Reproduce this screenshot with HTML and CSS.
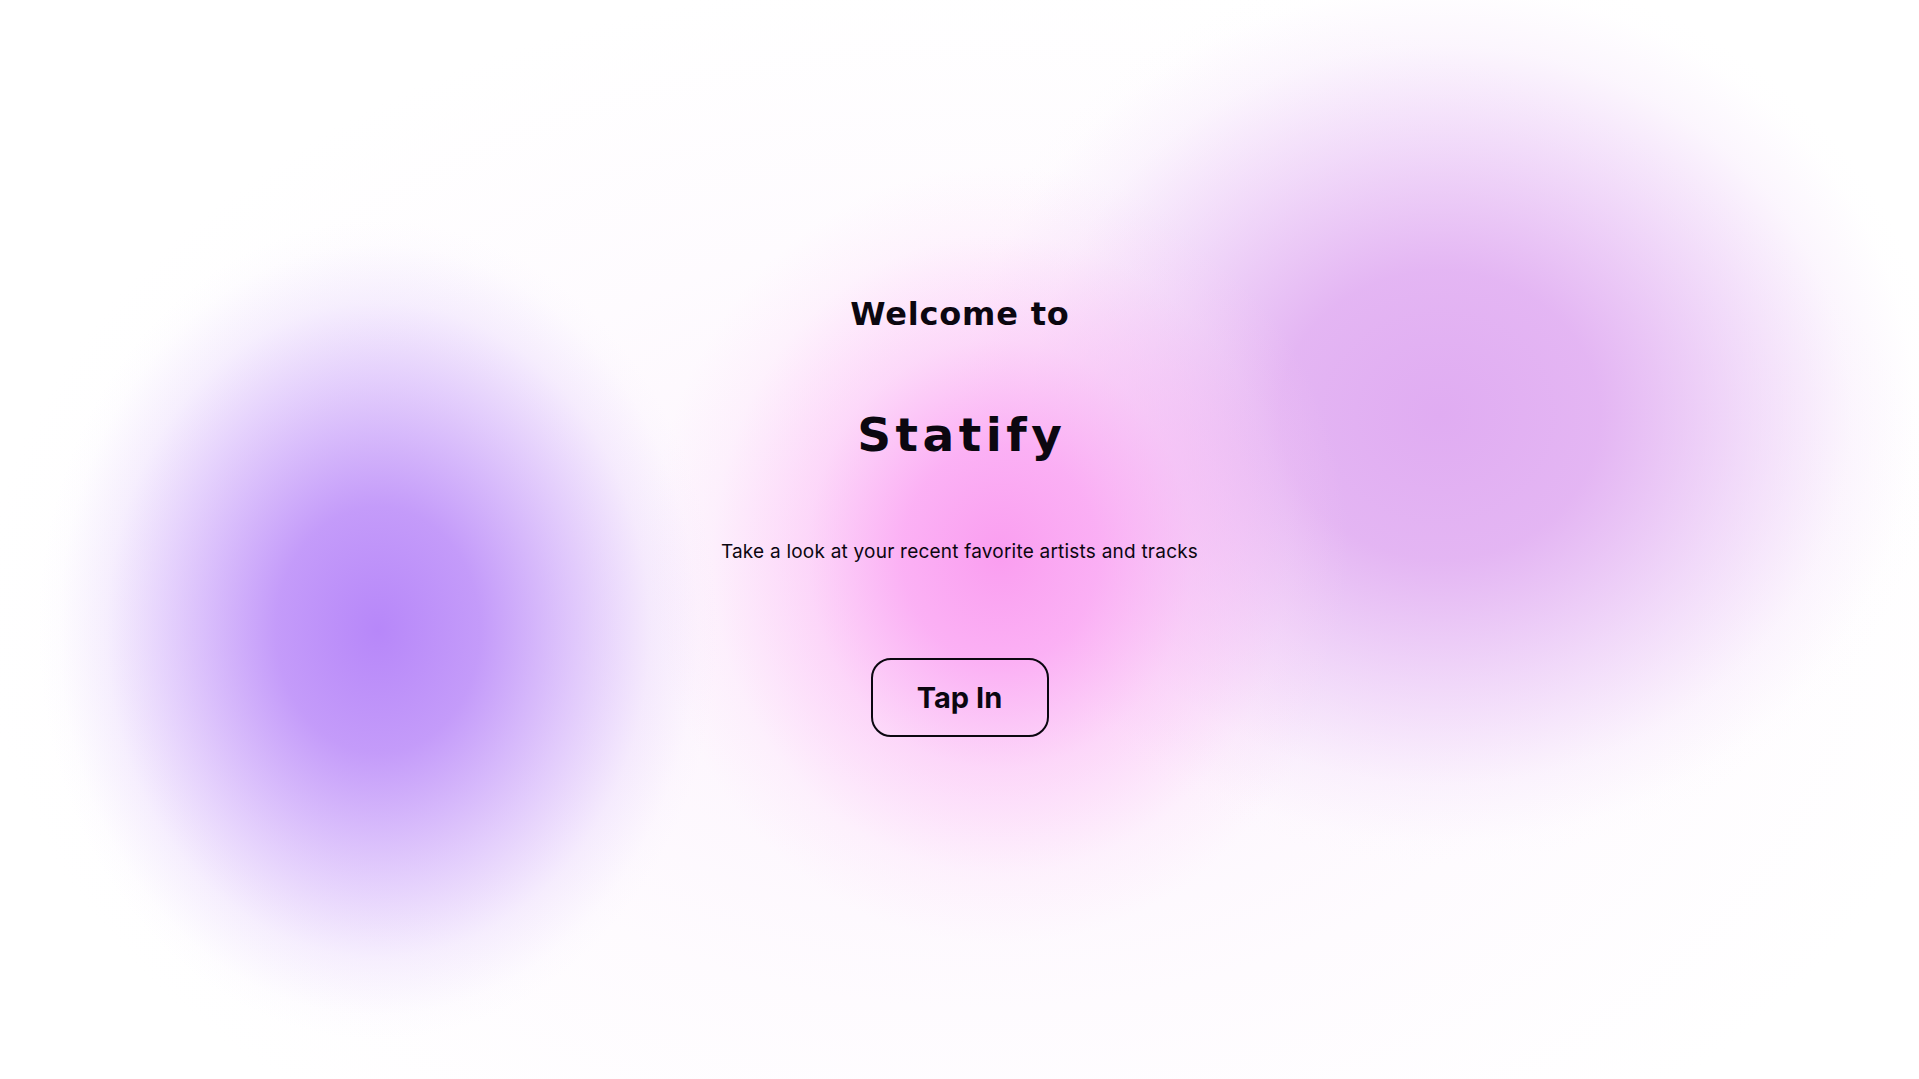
FILE: index.html
```html
<!DOCTYPE html>
<html lang="en">
<head>
<meta charset="utf-8">
<title>Statify</title>
<link rel="stylesheet" href="styles.css">
</head>
<body>
<main class="hero">
  <h2 class="hero-kicker">Welcome to</h2>
  <h1 class="hero-title">Statify</h1>
  <p class="hero-sub">Take a look at your recent favorite artists and tracks</p>
  <button class="hero-btn" type="button">Tap In</button>
</main>
</body>
</html>
```

FILE: styles.css
```css
html, body {
  margin: 0;
  height: 100%;
}
body {
  font-family: "Inter", "Noto Sans", sans-serif;
  color: #0b0710;
  background-color: #ffffff;
  background-image:
    radial-gradient(ellipse 340px 410px at 378px 630px, rgba(183,135,249,1) 0%, rgba(188,142,249,0.88) 30%, rgba(200,160,250,0.55) 58%, rgba(215,185,250,0.22) 80%, rgba(235,220,252,0.06) 94%, rgba(255,255,255,0) 100%),
    radial-gradient(ellipse 350px 390px at 1000px 555px, rgba(250,158,240,1) 0%, rgba(251,165,243,0.85) 28%, rgba(252,185,245,0.5) 55%, rgba(253,210,248,0.18) 82%, rgba(255,255,255,0) 100%),
    radial-gradient(ellipse 500px 450px at 1440px 415px, rgba(224,172,242,1) 0%, rgba(225,174,242,0.9) 32%, rgba(230,188,245,0.55) 60%, rgba(238,208,248,0.2) 82%, rgba(250,240,252,0.05) 95%, rgba(255,255,255,0) 100%),
    radial-gradient(ellipse 1000px 650px at 980px 620px, rgba(248,225,250,0.45) 0%, rgba(250,235,252,0.2) 60%, rgba(255,255,255,0) 100%);
  background-repeat: no-repeat;
}
.hero {
  display: flex;
  flex-direction: column;
  align-items: center;
  padding-top: 294px;
}
.hero-kicker {
  margin: 0 -0.8px 0 0;
  font-family: "DejaVu Sans", "Inter", sans-serif;
  font-size: 32px;
  line-height: 40px;
  font-weight: 700;
  letter-spacing: 0.8px;
}
.hero-title {
  margin: 73px -4.5px 0 0;
  font-family: "DejaVu Sans", "Inter", sans-serif;
  font-size: 47px;
  line-height: 56px;
  font-weight: 700;
  letter-spacing: 4.5px;
}
.hero-sub {
  margin: 77px 0 0;
  font-size: 19px;
  line-height: 24px;
  font-weight: 400;
  letter-spacing: 0.22px;
}
.hero-btn {
  margin-top: 94px;
  width: 178px;
  height: 79px;
  border: 2px solid #0b0710;
  border-radius: 20px;
  background: transparent;
  font-family: inherit;
  font-size: 29px;
  font-weight: 700;
  color: #0b0710;
  cursor: pointer;
}
```
